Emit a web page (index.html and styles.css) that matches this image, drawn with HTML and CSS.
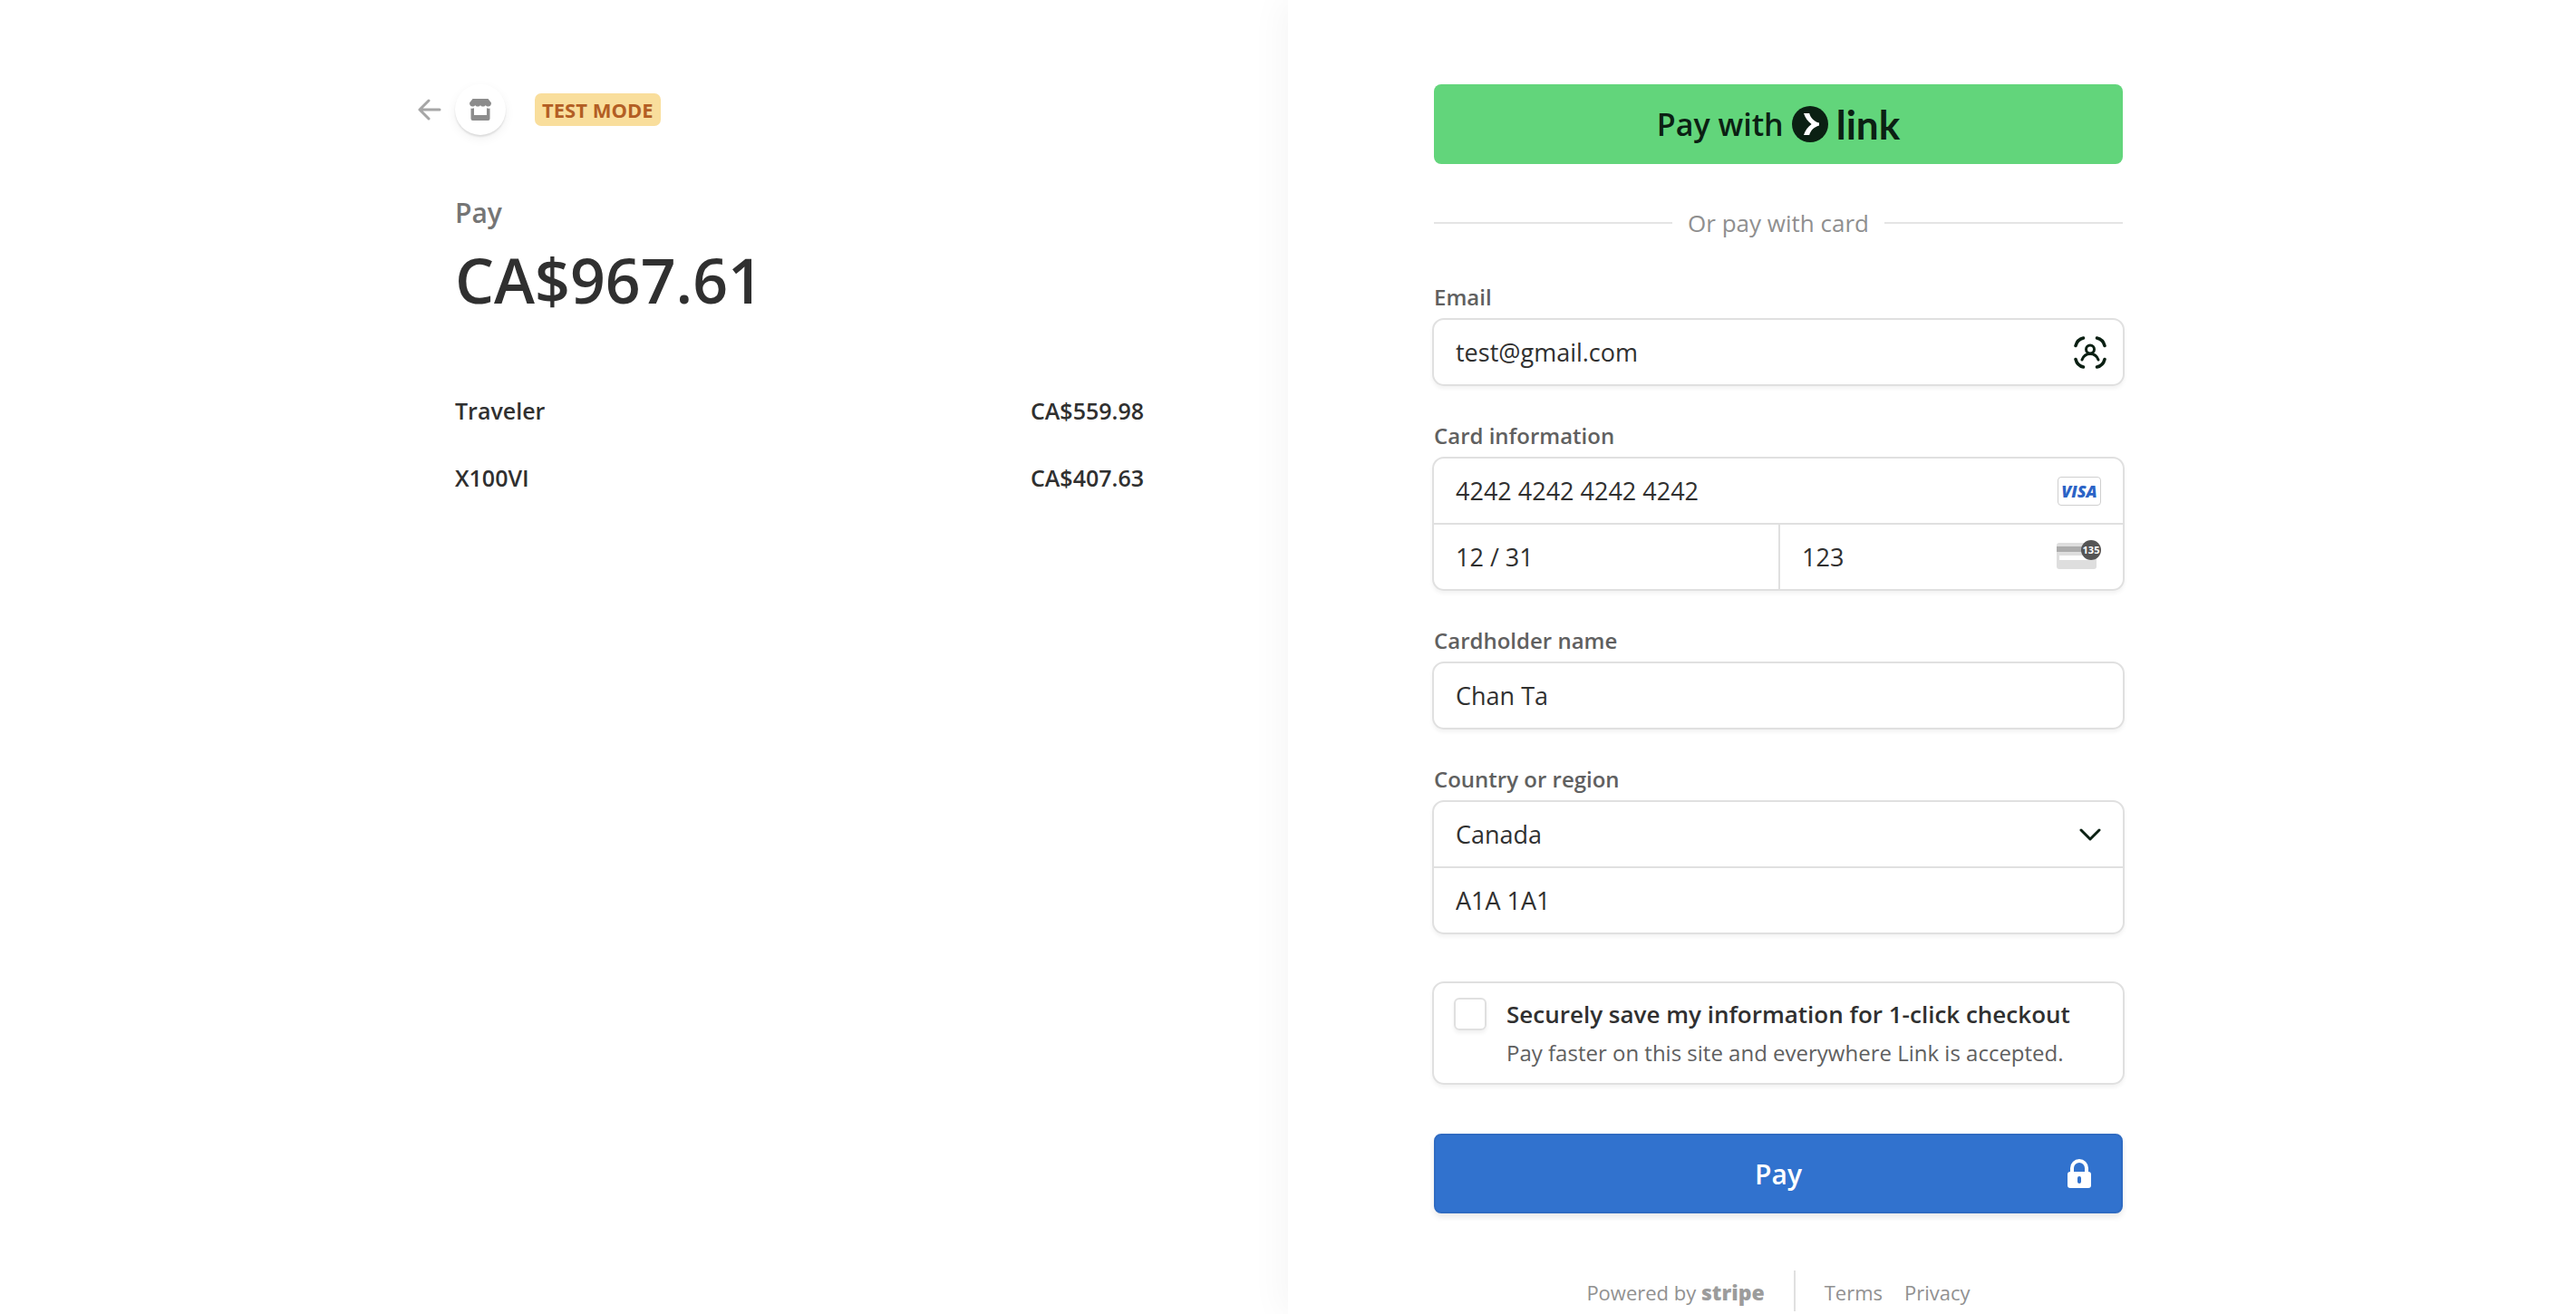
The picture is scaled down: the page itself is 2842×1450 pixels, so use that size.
FILE: index.html
```
<!DOCTYPE html>
<html lang="en">
<head>
  <meta charset="UTF-8" />
  <meta name="viewport" content="width=device-width, initial-scale=1.0" />
  <title>Checkout</title>
  <link rel="stylesheet" href="styles.css">
</head>
<body>
  <div class="checkout">
    <section class="summary">
      <div class="column">
        <header class="merchant">
          <a href="#" class="back" aria-label="Back">
            <svg width="26" height="24" viewBox="0 0 26 24" fill="none" stroke="#a6a6a6" stroke-width="3" stroke-linecap="round" stroke-linejoin="round"><path d="M24 12H2M12 2L2 12l10 10"/></svg>
          </a>
          <span class="shop">
            <svg width="24" height="24" viewBox="0 0 24 24" fill="#8c8c8c"><path d="M3.500 0h17L24 4.500c0 2.500-1.300 4-3.300 4-1.300 0-2.300-.600-2.900-1.600-.600 1-1.600 1.600-2.900 1.600s-2.300-.600-2.900-1.600c-.600 1-1.600 1.600-2.900 1.600s-2.300-.600-2.900-1.600C5.600 7.900 4.600 8.500 3.300 8.500 1.300 8.500 0 7 0 4.500z"/><path d="M1.500 10.500c1.300.500 2.400.300 3.500-.200V18h14v-7.700c1.200.500 2.300.700 3.500.200V22a2 2 0 0 1-2 2h-17a2 2 0 0 1-2-2z"/></svg>
          </span>
          <span class="badge">TEST MODE</span>
        </header>

        <p class="pay-label">Pay</p>
        <h1 class="amount">CA$967.61</h1>

        <ul class="items">
          <li><span>Traveler</span><span>CA$559.98</span></li>
          <li><span>X100VI</span><span>CA$407.63</span></li>
        </ul>
      </div>
    </section>

    <main class="payment">
      <form class="column">
        <button type="button" class="link-button">
          Pay with
          <svg width="40" height="40" viewBox="0 0 40 40"><circle cx="20" cy="20" r="20" fill="#0b2013"/><path d="M13 8h6.200c1.200 4.800 5 9 10.800 10.600v2.800C24.200 23 20.400 27.200 19.200 32H13c1.500-5 4.500-9 8.600-12C17.500 17 14.500 13 13 8z" fill="#fff"/></svg>
          <span class="link-name">link</span>
        </button>

        <div class="divider">Or pay with card</div>

        <div class="field">
          <label for="email">Email</label>
          <div class="box">
            <div class="row">
              <input type="email" id="email" value="test@gmail.com">
              <svg class="scan" width="36" height="36" viewBox="0 0 36 36" fill="none" stroke="#0b2013" stroke-linecap="round"><path stroke-width="3.500" d="M2 10.500C3 6.500 6 3 10.500 2M25.500 2C30 3 33 6.500 34 10.500M34 25.500C33 29.500 30 33 25.500 34M10.500 34C6 33 3 29.500 2 25.500"/><circle cx="18" cy="14.500" r="4.500" stroke-width="3"/><path stroke-width="3" d="M9 26c1.500-4 5-6.500 9-6.500s7.500 2.500 9 6.500"/></svg>
            </div>
          </div>
        </div>

        <div class="field">
          <label for="card">Card information</label>
          <div class="box">
            <div class="row">
              <input type="text" id="card" value="4242 4242 4242 4242">
              <span class="visa">VISA</span>
            </div>
            <div class="split">
              <div class="row">
                <input type="text" aria-label="Expiration" value="12 / 31">
              </div>
              <div class="row">
                <input type="text" aria-label="CVC" value="123">
                <svg width="49" height="38" viewBox="0 0 49 38"><rect y="3" width="44" height="29" rx="3" fill="#dedede"/><rect y="7" width="44" height="6" fill="#adadad"/><rect x="3" y="17" width="38" height="5" fill="#fff"/><circle cx="38" cy="11" r="11" fill="#555"/><text x="38" y="15" text-anchor="middle" class="cvc-digits">135</text></svg>
              </div>
            </div>
          </div>
        </div>

        <div class="field">
          <label for="name">Cardholder name</label>
          <div class="box">
            <div class="row">
              <input type="text" id="name" value="Chan Ta">
            </div>
          </div>
        </div>

        <div class="field">
          <label for="country">Country or region</label>
          <div class="box">
            <div class="row">
              <select id="country"><option>Canada</option></select>
              <svg width="24" height="14" viewBox="0 0 24 14" fill="none" stroke="#0b2013" stroke-width="3" stroke-linecap="round" stroke-linejoin="round"><path d="M2 2l10 10L22 2"/></svg>
            </div>
            <div class="row">
              <input type="text" aria-label="Postal code" value="A1A 1A1">
            </div>
          </div>
        </div>

        <div class="box save">
          <input type="checkbox" id="save">
          <div>
            <label for="save" class="save-title">Securely save my information for 1-click checkout</label>
            <p class="save-note">Pay faster on this site and everywhere Link is accepted.</p>
          </div>
        </div>

        <button type="submit" class="submit">
          Pay
          <svg class="lock" width="26" height="32" viewBox="0 0 26 32"><path d="M5 15V10a8 8 0 0 1 16 0v5" fill="none" stroke="#fff" stroke-width="4"/><rect y="14" width="26" height="18" rx="3" fill="#fff"/><rect x="11" y="19" width="4" height="8" rx="2" fill="#3172ce"/></svg>
        </button>

        <footer class="footer">
          <a href="#" class="powered">Powered by <strong>stripe</strong></a>
          <nav>
            <a href="#">Terms</a>
            <a href="#">Privacy</a>
          </nav>
        </footer>
      </form>
    </main>
  </div>
</body>
</html>
```
FILE: styles.css
```
* {
  margin: 0; padding: 0; box-sizing: border-box;
}
body {
  font-family: "Open Sans", "Noto Sans", sans-serif;
  font-size: 26px;
  background: #fff;
  color: #303030;
}
a {
  color: inherit;
  text-decoration: none;
}
button, input, select {
  font: inherit;
  color: inherit;
}
svg {
  display: block;
  flex: none;
}
.checkout {
  display: grid;
  grid-template-columns: 1fr 1fr;
  min-height: 100vh;
}
.column {
  width: 100%;
  max-width: 760px;
}
.summary {
  display: flex;
  justify-content: flex-end;
  padding: 93px 159px 0;
}
.payment {
  padding: 93px 161px 0;
  box-shadow: -8px 0 36px rgba(0,0,0,0.04);
}

/* Order summary */
.merchant {
  display: flex;
  align-items: center;
  margin-left: -41px;
}
.back {
  margin-right: 15px;
}
.shop {
  display: flex;
  align-items: center;
  justify-content: center;
  width: 56px;
  height: 56px;
  border-radius: 50%;
  box-shadow: 0 2px 2px rgba(0,0,0,0.1), 0 4px 12px rgba(0,0,0,0.06);
}
.badge {
  margin-left: 32px;
  padding: 0 8px;
  border-radius: 7px;
  background: #f9de9c;
  color: #b35e24;
  font-size: 22px;
  font-weight: 700;
  line-height: 36px;
}
.pay-label {
  margin-top: 66px;
  color: #757575;
  font-size: 30px;
  font-weight: 600;
  line-height: 40px;
}
.amount {
  margin-top: 14px;
  font-size: 68px;
  font-weight: 600;
  line-height: 80px;
}
.items {
  display: grid;
  gap: 38px;
  margin-top: 86px;
  list-style: none;
  font-size: 25px;
  font-weight: 600;
  line-height: 36px;
}
.items li {
  display: flex;
  justify-content: space-between;
}

/* Payment form */
.link-button, .submit {
  display: flex;
  align-items: center;
  justify-content: center;
  width: 100%;
  height: 88px;
  border: none;
  border-radius: 8px;
  cursor: pointer;
}
.link-button {
  gap: 9px;
  background: #62d57b;
  color: #0b2013;
  font-size: 34px;
  font-weight: 600;
}
.link-name {
  font-family: Lato, sans-serif;
  font-size: 44px;
  font-weight: 700;
}
.divider {
  display: flex;
  align-items: center;
  gap: 17px;
  margin-top: 46px;
  margin-bottom: 47px;
  color: #8f8f8f;
  line-height: 38px;
}
.divider::before, .divider::after {
  content: "";
  flex: 1;
  height: 2px;
  background: #e4e4e4;
}
.field {
  margin-bottom: 39px;
}
.field label {
  display: block;
  margin-bottom: 7px;
  color: #606060;
  font-size: 24px;
  font-weight: 600;
  line-height: 32px;
}
.box {
  margin: 0 -2px;
  border: 2px solid #e0e0e0;
  border-radius: 13px;
  box-shadow: 0 3px 4px rgba(0,0,0,0.05);
}
.row {
  display: flex;
  align-items: center;
  min-width: 0;
  padding: 0 24px;
}
.box > * + * {
  border-top: 2px solid #e0e0e0;
}
.row input, .row select {
  flex: 1;
  min-width: 0;
  height: 71px;
  border: none;
  outline: none;
  background: none;
  font-size: 27px;
  appearance: none;
}
.split {
  display: grid;
  grid-template-columns: 1fr 1fr;
}
.split .row + .row {
  border-left: 2px solid #e0e0e0;
}
.row .scan {
  margin-right: -6px;
}
.visa {
  width: 48px;
  border: 1px solid #cfcfcf;
  border-radius: 4px;
  color: #2b63c6;
  font-size: 18px;
  font-style: italic;
  font-weight: 800;
  line-height: 30px;
  text-align: center;
}
.cvc-digits {
  fill: #fff;
  font-size: 11px;
  font-weight: 700;
}
.save {
  display: flex;
  gap: 22px;
  margin-top: 52px;
  padding: 13px 22px 11px;
}
.save > * + * {
  border: none;
}
.save input {
  flex: none;
  width: 36px;
  height: 36px;
  margin-top: 3px;
  border: 2px solid #e0e0e0;
  border-radius: 6px;
  box-shadow: 0 3px 4px rgba(0,0,0,0.06);
  appearance: none;
}
.save-title {
  display: block;
  font-weight: 600;
  line-height: 42px;
}
.save-note {
  color: #606060;
  font-size: 24px;
  line-height: 44px;
}
.submit {
  position: relative;
  margin-top: 54px;
  border: 2px solid #2f6bc2;
  background: #3172ce;
  box-shadow: 0 4px 6px rgba(0,0,0,0.09);
  color: #fff;
  font-size: 30px;
  font-weight: 600;
}
.lock {
  position: absolute;
  right: 33px;
}
.footer {
  display: flex;
  justify-content: center;
  margin-top: 63px;
  color: #919191;
  font-size: 22px;
  line-height: 41px;
}
.footer a {
  padding-top: 4px;
}
.powered {
  padding-right: 32px;
  border-right: 2px solid #e0e0e0;
}
.powered strong {
  color: #9c9c9c;
  font-size: 23px;
  font-weight: 800;
  line-height: 30px;
}
.footer nav {
  display: flex;
  gap: 24px;
  padding-left: 32px;
}

@media (max-width: 1400px) {
  .checkout {
    grid-template-columns: 1fr;
  }
  .summary, .payment {
    justify-content: flex-start;
    padding: 60px;
  }
}
```
